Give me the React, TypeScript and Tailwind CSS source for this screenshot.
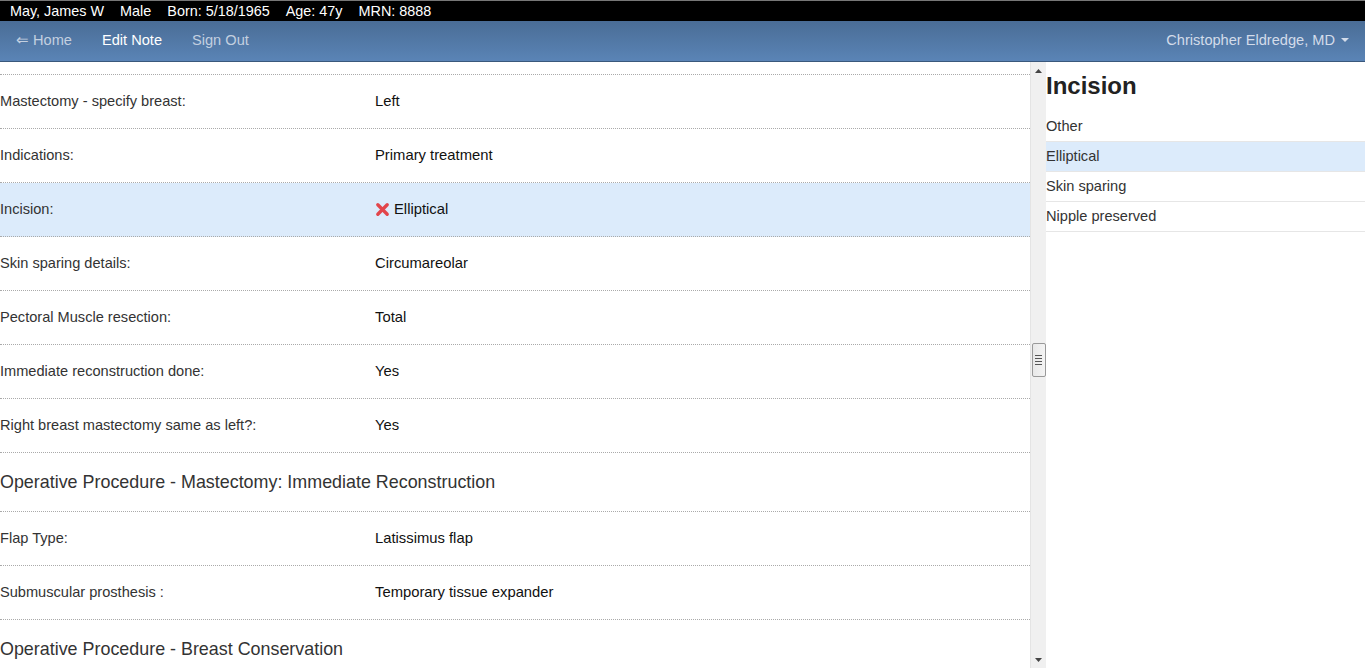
import React from "react";

const rows: Array<{ type: "row" | "head"; label: string; value?: string; selected?: boolean; err?: boolean }> = [
  { type: "row", label: "Mastectomy - specify breast:", value: "Left" },
  { type: "row", label: "Indications:", value: "Primary treatment" },
  { type: "row", label: "Incision:", value: "Elliptical", selected: true, err: true },
  { type: "row", label: "Skin sparing details:", value: "Circumareolar" },
  { type: "row", label: "Pectoral Muscle resection:", value: "Total" },
  { type: "row", label: "Immediate reconstruction done:", value: "Yes" },
  { type: "row", label: "Right breast mastectomy same as left?:", value: "Yes" },
  { type: "head", label: "Operative Procedure - Mastectomy: Immediate Reconstruction" },
  { type: "row", label: "Flap Type:", value: "Latissimus flap" },
  { type: "row", label: "Submuscular prosthesis :", value: "Temporary tissue expander" },
  { type: "head", label: "Operative Procedure - Breast Conservation" },
];

const options = ["Other", "Elliptical", "Skin sparing", "Nipple preserved"];

export default function App() {
  return (
    <div className="w-[1365px] h-[668px] overflow-hidden bg-white flex flex-col" style={{ fontFamily: '"Liberation Sans", Arial, sans-serif' }}>
      {/* patient bar */}
      <div className="h-[21px] bg-black border-t border-[#777] flex items-center pl-[10px] text-white text-[14.4px] leading-none gap-[16px] shrink-0">
        <span>May, James W</span>
        <span>Male</span>
        <span>Born: 5/18/1965</span>
        <span>Age: 47y</span>
        <span>MRN: 8888</span>
      </div>
      {/* nav */}
      <div className="h-[41px] shrink-0 bg-gradient-to-b from-[#4a6d96] to-[#5a84b6] border-b border-[#3a587c] flex items-center px-[16px] text-[14.6px]">
        <div className="flex items-center gap-[30px]">
          <span className="text-[#c3d0e0]">⇐ Home</span>
          <span className="text-white">Edit Note</span>
          <span className="text-[#c3d0e0]">Sign Out</span>
        </div>
        <div className="ml-auto flex items-center gap-[6px] text-[#d3dcea]">
          <span>Christopher Eldredge, MD</span>
          <svg width="8" height="5" viewBox="0 0 8 5"><path d="M0 0h8L4 4z" fill="#d3dcea" /></svg>
        </div>
      </div>
      {/* body */}
      <div className="flex flex-1 min-h-0">
        <div className="w-[1030px] overflow-hidden flex flex-col">
          <div className="h-[13px] shrink-0 border-b border-dotted border-[#aaa]" />
          {rows.map((r, i) =>
            r.type === "row" ? (
              <div
                key={i}
                className={`h-[54px] shrink-0 flex items-center border-b border-dotted border-[#aaa] text-[14.6px] ${r.selected ? "bg-[#dcebfb]" : ""}`}
              >
                <div className="w-[375px] text-[#333]">{r.label}</div>
                <div className="flex items-center gap-[4px] text-[#111] text-[14.8px]">
                  {r.err && (
                    <svg width="15" height="15" viewBox="0 0 16 16">
                      <path d="M3 3L13 13M13 3L3 13" stroke="#e2454b" strokeWidth="3.6" strokeLinecap="round" />
                    </svg>
                  )}
                  <span>{r.value}</span>
                </div>
              </div>
            ) : (
              <div key={i} className="h-[59px] shrink-0 flex items-center border-b border-dotted border-[#aaa] text-[17.9px] text-[#333]">
                {r.label}
              </div>
            )
          )}
        </div>
        {/* scrollbar */}
        <div className="w-[16px] shrink-0 bg-[#f0f0f0] border-l border-[#e4e4e4] flex flex-col items-center">
          <div className="h-[17px] flex items-center justify-center">
            <svg width="7" height="4" viewBox="0 0 7 4"><path d="M0 4L3.5 0L7 4z" fill="#444" /></svg>
          </div>
          <div className="h-[264px]" />
          <div className="w-[14px] h-[34px] bg-gradient-to-r from-[#e8e8e8] to-[#f4f4f4] border border-[#999] rounded-[2px] flex flex-col items-center justify-center gap-[2px]">
            <div className="w-[7px] h-[1px] bg-[#555]" />
            <div className="w-[7px] h-[1px] bg-[#555]" />
            <div className="w-[7px] h-[1px] bg-[#555]" />
            <div className="w-[7px] h-[1px] bg-[#555]" />
          </div>
          <div className="flex-1" />
          <div className="h-[17px] flex items-center justify-center">
            <svg width="7" height="4" viewBox="0 0 7 4"><path d="M0 0L3.5 4L7 0z" fill="#444" /></svg>
          </div>
        </div>
        {/* right panel */}
        <div className="flex-1 pt-[10px]">
          <div className="text-[24px] font-bold text-[#222] leading-[28px] h-[40px]">Incision</div>
          {options.map((o) => (
            <div
              key={o}
              className={`h-[30px] flex items-center text-[14.6px] text-[#333] border-b border-[#e6e6e6] ${o === "Elliptical" ? "bg-[#dcebfb] border-[#dcebfb]" : ""}`}
            >
              {o}
            </div>
          ))}
        </div>
      </div>
    </div>
  );
}
